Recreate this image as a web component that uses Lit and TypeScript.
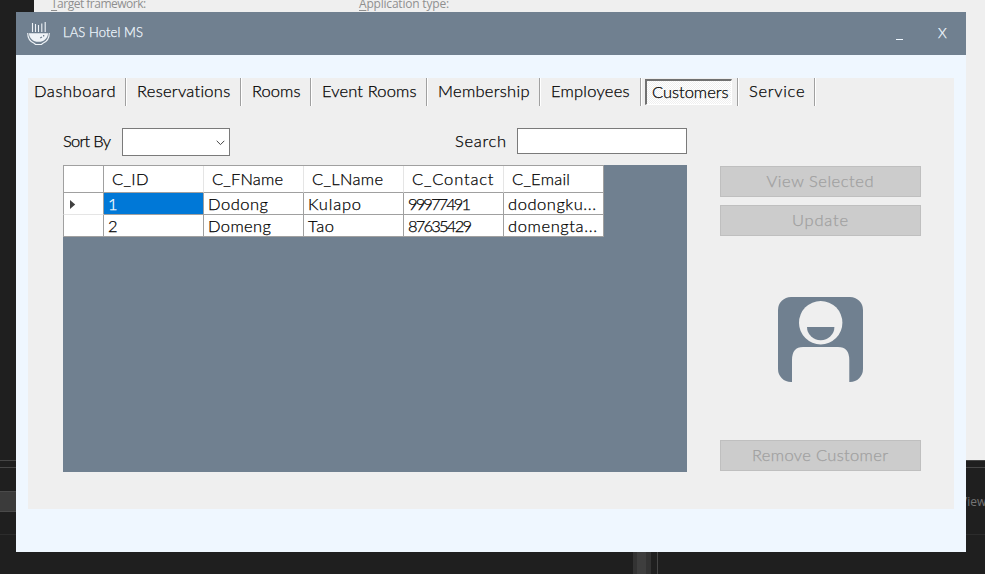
import { LitElement, html, css } from "lit";
import { customElement, property } from "lit/decorators.js";

/** A single line of text, tracked so that it spans a given width. */
@customElement("tracked-text")
class TrackedText extends LitElement {
  @property() text = "";
  @property({ type: Number }) width = 0;

  static styles = css`
    :host { display: block; white-space: pre; line-height: 20px; }
    span { display: inline-block; }
  `;

  updated() {
    const span = this.renderRoot.querySelector("span") as HTMLElement;
    span.style.letterSpacing = "0px";
    const natural = span.getBoundingClientRect().width;
    const gap = (this.width - natural) / Math.max(1, this.text.length - 1);
    span.style.letterSpacing = `${gap.toFixed(3)}px`;
    span.style.marginRight = `${(-gap).toFixed(3)}px`;
  }

  render() {
    return html`<span>${this.text}</span>`;
  }
}

const t = (text: string, width: number) =>
  html`<tracked-text .text=${text} .width=${width}></tracked-text>`;

const TABS = [
  { label: "Dashboard", text: 81.5, box: 98 },
  { label: "Reservations", text: 93.5, box: 115 },
  { label: "Rooms", text: 48.5, box: 70 },
  { label: "Event Rooms", text: 94.5, box: 116 },
  { label: "Membership", text: 91.5, box: 113 },
  { label: "Employees", text: 78.5, box: 101 },
  { label: "Customers", text: 76.5, box: 97, active: true },
  { label: "Service", text: 55.5, box: 77 },
];

const COLUMNS: [string, number][] = [
  ["C_ID", 36.5], ["C_FName", 71], ["C_LName", 71], ["C_Contact", 81.5], ["C_Email", 58],
];

const ROWS: [string, number][][] = [
  [["1", 6], ["Dodong", 60], ["Kulapo", 53], ["99977491", 63], ["dodongku...", 88]],
  [["2", 9], ["Domeng", 63], ["Tao", 26], ["87635429", 64], ["domengta...", 89]],
];

@customElement("app-root")
class AppRoot extends LitElement {
  static styles = css`
    :host {
      display: block;
      position: relative;
      width: 985px;
      height: 574px;
      overflow: hidden;
      background: #1f1f1f;
      color: #000;
      font: 300 16.5px/20px "Century Gothic", Lato, sans-serif;
    }
    * { box-sizing: border-box; }
    svg { display: block; }

    /* the editor behind the window */
    .editor { position: absolute; inset: 0; display: flex; flex-direction: column; }
    .props {
      height: 460px; margin-left: 34px; background: #efefef; color: #8f8f8f;
      font: 12px/16px "Open Sans", sans-serif; display: flex; padding-left: 17px;
    }
    .props span { width: 308px; margin-top: -4px; letter-spacing: -0.5px; }
    .props span + span { letter-spacing: -0.2px; }
    .props u { text-underline-offset: 2px; }
    .dock { flex: 1; border-top: 1px solid #464646; display: flex; flex-direction: column; }
    .line { height: 7px; border-bottom: 1px solid #464646; }
    .bar { height: 67px; border-bottom: 1px solid #2c2c2c; display: flex; justify-content: space-between; padding-top: 23px; }
    .sel { width: 16px; height: 21px; background: #3b3b3b; border: solid #4a4a4a; border-width: 1px 0; }
    .view { width: 25px; height: 20px; margin-top: 1px; color: #747474; font: 12px/20px "Open Sans", sans-serif; overflow: hidden; white-space: pre; }
    .scroll { flex: 1; display: flex; padding-left: 633px; }
    .thumb { width: 18px; background: #3e3e3e; border: solid #333; border-width: 0 5px 0 4px; }
    .split { width: 7px; border-right: 1px solid #464646; }

    .window {
      position: absolute; left: 16px; top: 12px; width: 950px; height: 540px;
      background: #eff7ff; display: flex; flex-direction: column;
      -webkit-text-stroke-width: 0.25px;
    }
    .title { height: 43px; background: #708090; color: #f0f8ff; display: flex; padding-left: 11px; font-size: 13px; }
    .logo { margin-top: 10px; }
    .title .name { margin: 10px 0 0 13px; width: 833px; }
    .min { width: 7px; height: 1px; background: #f0f8ff; margin-top: 27px; }
    .close { margin: 11px 0 0 35px; font-size: 14px; }

    .panel { margin: 23px 12px 0; height: 431px; background: #efefef; }
    .tabs { display: flex; height: 28px; }
    .tab { padding: 3px 0 0 11px; border-right: 1px solid #a0a0a0; box-shadow: 1px 0 #fff; }
    .tab:first-child { padding-left: 6px; }
    .tab.active { padding: 1px 5px 1px 4px; }
    .active .pressed {
      height: 26px; padding: 1px 0 0 5px;
      background: repeating-conic-gradient(#fff 0 25%, #efefef 0 50%) 0 0 / 2px 2px;
      border: solid; border-width: 2px 1px 1px 2px; border-color: #717171 #fff #fff #717171;
    }

    .body { display: flex; padding: 22px 33px 0 35px; justify-content: space-between; }
    .left { width: 624px; }
    .filters { display: flex; height: 37px; }
    .filters tracked-text { margin-top: 3px; }
    .combo {
      margin-left: 11px; width: 108px; height: 28px; border: 1px solid #7a7a7a; background: #fff;
      display: flex; align-items: center; justify-content: flex-end; padding: 2px 4px 0 0;
    }
    .search { display: flex; margin-left: auto; }
    .input { margin-left: 11px; width: 170px; height: 26px; border: 1px solid #7a7a7a; background: #fff; }

    .grid { height: 307px; background: #708090; }
    .table {
      width: 541px; display: grid; grid-template-columns: 41px repeat(5, 100px);
      grid-template-rows: 27px 22px 22px; border: solid #a0a0a0; border-width: 1px 0 0; background: #fff;
    }
    .cell { border: solid #a0a0a0; border-width: 0 1px 1px 0; padding-left: 4px; overflow: hidden; }
    .cell tracked-text { margin-top: 1px; }
    .head { padding-left: 8px; border-right-color: #e5e5e5; }
    .head tracked-text { margin-top: 3px; }
    .corner { border-left-width: 1px; border-right-color: #a0a0a0; }
    .rowhead { border-left-width: 1px; border-bottom-color: #e5e5e5; padding: 7px 0 0 6px; }
    .rowhead.last, .head.last { border-bottom-color: #a0a0a0; }
    .head.last { border-right-color: #a0a0a0; }
    .selected { background: #0078d7; color: #fff; }

    .right { width: 201px; height: 371px; padding-top: 38px; display: flex; flex-direction: column; }
    .btn {
      height: 31px; border: 1px solid #bfbfbf; background: #ccc; color: #a0a0a0;
      display: flex; justify-content: center; padding: 4px 1px 0 0; flex: none;
    }
    .btn + .btn { margin-top: 8px; }
    .avatar { margin: 61px 0 58px 58px; flex: none; }
  `;

  render() {
    return html`
      <div class="editor">
        <div class="props"><span><u>T</u>arget framework:</span><span><u>A</u>pplication type:</span></div>
        <div class="dock">
          <div class="line"></div>
          <div class="bar"><div class="sel"></div><div class="view">View</div></div>
          <div class="scroll"><div class="thumb"></div><div class="split"></div></div>
        </div>
      </div>

      <div class="window">
        <div class="title">
          <svg class="logo" width="23" height="24" viewBox="0 0 23 24">
            <g fill="none" stroke="#f0f4f8" stroke-width="1.1">
              <path d="M5.5 1V10M8.5 2V10M11.5 3V10M14.8 1.5V10M18.2 0V10" />
              <path d="M.7 11C.7 16 3.5 20 7.5 21.5L8.5 22.5H14.5L15.5 21.5C19.5 20 22.3 16 22.3 11" />
            </g>
            <path d="M2 11.2H21C21 16 17 19.8 11.5 19.8S2 16 2 11.2Z" fill="#f0f4f8" />
            <path d="M13.2 16L15 15M16 13.8h1.3" stroke="#708090" stroke-width="1.4" />
          </svg>
          <div class="name">${t("LAS Hotel MS", 80)}</div>
          <div class="min"></div>
          <div class="close">${t("X", 8)}</div>
        </div>
        <div class="panel">
          <div class="tabs">
            ${TABS.map((tab) => html`
              <div class="tab ${tab.active ? "active" : ""}" style="width:${tab.box}px">
                ${tab.active ? html`<div class="pressed">${t(tab.label, tab.text)}</div>` : t(tab.label, tab.text)}
              </div>`)}
          </div>
          <div class="body">
            <div class="left">
              <div class="filters">
                ${t("Sort By", 48)}
                <div class="combo">
                  <svg width="9" height="6" viewBox="0 0 9 6"><path d="M.7 .8L4.5 4.6L8.3 .8" fill="none" stroke="#444" /></svg>
                </div>
                <div class="search">${t("Search", 51)}<div class="input"></div></div>
              </div>
              <div class="grid">
                <div class="table">
                  <div class="cell head corner"></div>
                  ${COLUMNS.map(([name, w], i) => html`<div class="cell head ${i === 4 ? "last" : ""}">${t(name, w)}</div>`)}
                  ${ROWS.map((row, r) => html`
                    <div class="cell rowhead ${r ? "last" : ""}">
                      ${r ? "" : html`<svg width="6" height="9" viewBox="0 0 6 9"><path d="M0 0L5.2 4.5L0 9Z" fill="#404040" /></svg>`}
                    </div>
                    ${row.map(([text, w], c) => html`<div class="cell ${!r && !c ? "selected" : ""}">${t(text, w)}</div>`)}
                  `)}
                </div>
              </div>
            </div>
            <div class="right">
              <div class="btn">${t("View Selected", 107)}</div>
              <div class="btn">${t("Update", 56)}</div>
              <svg class="avatar" width="85" height="85" viewBox="0 0 85 85">
                <path fill="#708090" d="M13 0H72A13 13 0 0 1 85 13V72A13 13 0 0 1 72 85H71.3V63Q71.3 50 60 50H25Q14 50 14 63V85H13A13 13 0 0 1 0 72V13A13 13 0 0 1 13 0Z" />
                <circle cx="42.7" cy="25.7" r="21.7" fill="#efefef" />
                <path fill="#708090" d="M29 30H56.4A13.7 13.2 0 0 1 29 30Z" />
              </svg>
              <div class="btn">${t("Remove Customer", 136)}</div>
            </div>
          </div>
        </div>
      </div>
    `;
  }
}
